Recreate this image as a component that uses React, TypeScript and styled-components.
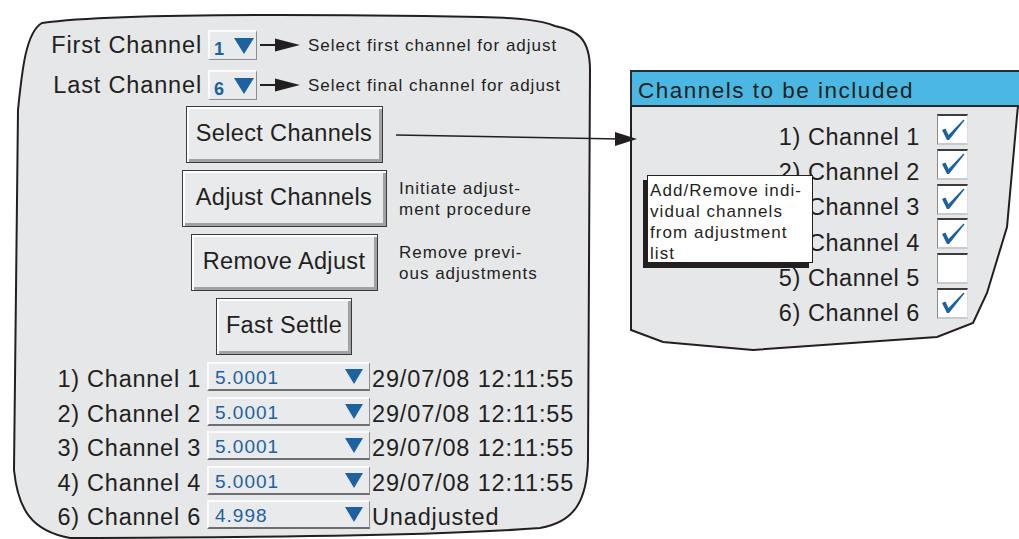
import React, { FC } from 'react';
import styled, { createGlobalStyle } from 'styled-components';

const GlobalStyle = createGlobalStyle`
	html, body {
		margin: 0;
		padding: 0;
		background: #ffffff;
		overflow: hidden;
	}
	body {
		font-family: 'Liberation Sans', Arial, sans-serif;
		color: #231f20;
	}
`;

const INK = '#231f20';
const BLUE = '#1d62a0';
const PANEL = '#e6e7e9';

const Page = styled.div`
	position: relative;
	width: 1019px;
	height: 539px;
	display: flex;
	align-items: flex-start;
	overflow: hidden;
`;

const LeftPanel = styled.div`
	position: relative;
	width: 600px;
	height: 539px;
	flex-shrink: 0;
	display: flex;
	flex-direction: column;
	padding-top: 30px;
	box-sizing: border-box;
`;

const Outline = styled.svg`
	position: absolute;
	left: 0;
	top: 0;
	z-index: 0;
`;

const Layer = styled.div`
	position: relative;
	z-index: 1;
	display: flex;
	flex-direction: column;
`;

const SelectorRow = styled.div`
	display: flex;
	align-items: center;
	height: 30px;
	& + & {
		margin-top: 10px;
	}
`;

const RowLabel = styled.span<{ $width: number; $spacing: number }>`
	width: ${(p) => p.$width}px;
	flex-shrink: 0;
	text-align: right;
	font-size: 23.5px;
	line-height: 22px;
	letter-spacing: ${(p) => p.$spacing}px;
	margin-bottom: 1px;
	white-space: nowrap;
`;

const MiniSelect = styled.div`
	margin-left: 6px;
	width: 49px;
	height: 30px;
	box-sizing: border-box;
	display: flex;
	align-items: center;
	justify-content: space-between;
	padding: 0 2px 0 4px;
	background: #e9eaec;
	border-top: 2px solid #fbfbfb;
	border-left: 2px solid #fbfbfb;
	border-right: 1px solid #8d8e90;
	border-bottom: 1px solid #8d8e90;
`;

const MiniValue = styled.span`
	color: ${BLUE};
	font-weight: bold;
	font-size: 18px;
	padding-top: 8px;
`;

const Note = styled.span`
	font-size: 17px;
	line-height: 21px;
	letter-spacing: 1px;
	white-space: nowrap;
`;

const PointerNote = styled(Note)`
	margin-left: 6px;
`;

const ButtonGrid = styled.div`
	margin-top: 6px;
	display: grid;
	grid-template-columns: 169px 230px auto;
	row-gap: 7px;
	align-items: center;
`;

const BevelButton = styled.button<{ $width: number }>`
	grid-column: 2;
	justify-self: center;
	width: ${(p) => p.$width}px;
	height: 57px;
	box-sizing: border-box;
	border: 1px solid #3a3a3a;
	background: #e9eaec;
	box-shadow: inset 2px 2px 0 #ffffff, inset -3px -3px 0 #a1a2a4;
	font-family: 'Liberation Sans', Arial, sans-serif;
	font-size: 23.5px;
	letter-spacing: 0.35px;
	color: ${INK};
	padding: 0 0 2px 0;
	white-space: nowrap;
`;

const ButtonNote = styled(Note)`
	grid-column: 3;
	white-space: pre;
`;

const ChannelList = styled.div`
	margin-top: 7px;
	display: flex;
	flex-direction: column;
	gap: 5.5px;
`;

const ChannelRow = styled.div`
	display: flex;
	align-items: flex-end;
	height: 29px;
`;

const ValueSelect = styled.div`
	margin-left: 6px;
	width: 163px;
	height: 29px;
	flex-shrink: 0;
	box-sizing: border-box;
	display: flex;
	align-items: center;
	justify-content: space-between;
	padding: 0 6px 0 6px;
	background: #e9eaec;
	border-top: 2px solid #fbfbfb;
	border-left: 2px solid #fbfbfb;
	border-right: 1px solid #8d8e90;
	border-bottom: 2px solid #6d6e70;
`;

const ValueText = styled.span`
	color: ${BLUE};
	font-size: 19px;
	letter-spacing: 1px;
	padding-top: 3px;
`;

const Stamp = styled.span`
	margin-left: 2px;
	margin-bottom: 1px;
	font-size: 23.5px;
	line-height: 22px;
	letter-spacing: 0.85px;
	white-space: nowrap;
`;

const RightPanel = styled.div`
	margin-top: 70px;
	margin-left: 30px;
	width: 389px;
	flex-shrink: 0;
	display: flex;
	flex-direction: column;
`;

const PanelHeader = styled.div`
	height: 36px;
	box-sizing: border-box;
	background: #4ab8e3;
	border-top: 2px solid #2b2b2b;
	border-left: 2px solid #2b2b2b;
	border-bottom: 1px solid #2b2b2b;
	padding: 6px 0 0 6px;
	font-size: 22.5px;
	line-height: 26px;
	letter-spacing: 1.5px;
	white-space: nowrap;
`;

const PanelBody = styled.div`
	position: relative;
	height: 246px;
`;

const IncludeList = styled.div`
	position: relative;
	z-index: 1;
	padding-top: 8px;
	display: flex;
	flex-direction: column;
	gap: 3.8px;
`;

const IncludeRow = styled.div`
	display: flex;
	justify-content: flex-end;
	align-items: flex-end;
	height: 31px;
	padding-right: 51px;
`;

const IncludeLabel = styled.span<{ $drop: number }>`
	margin-right: 17px;
	margin-bottom: ${(p) => -p.$drop}px;
	font-size: 23.5px;
	line-height: 22px;
	letter-spacing: 0.55px;
	white-space: nowrap;
`;

const CheckBox = styled.div`
	width: 31px;
	height: 31px;
	box-sizing: border-box;
	background: #ffffff;
	border-top: 2px solid #3d3d3d;
	border-left: 1px solid #8a8a8a;
	border-bottom: 2px solid #c9cacc;
	border-right: 1px solid #dcdddf;
	display: flex;
	align-items: center;
	justify-content: center;
`;

const Callout = styled.div`
	position: absolute;
	left: 647px;
	top: 175px;
	width: 166px;
	height: 88px;
	box-sizing: border-box;
	background: #ffffff;
	border: 1px solid ${INK};
	box-shadow: -4px 5px 0 ${INK};
	padding: 4px 0 0 2px;
	font-size: 17px;
	line-height: 21px;
	letter-spacing: 1.05px;
	white-space: pre;
	z-index: 3;
`;

const Connector = styled.svg`
	position: absolute;
	left: 0;
	top: 0;
	z-index: 2;
	pointer-events: none;
`;

const Triangle: FC<{ w: number; h: number }> = ({ w, h }) => (
	<svg width={w} height={h} viewBox={`0 0 ${w} ${h}`}>
		<polygon points={`0,0 ${w},0 ${w / 2},${h}`} fill={BLUE} />
	</svg>
);

const Pointer: FC = () => (
	<svg width="42" height="14" viewBox="0 0 42 14" style={{ marginLeft: 3 }}>
		<line x1="0" y1="7" x2="18" y2="7" stroke={INK} strokeWidth="2" />
		<polygon points="15,0.5 40,7 15,13.5" fill={INK} />
	</svg>
);

const Tick: FC = () => (
	<svg width="26" height="24" viewBox="0 0 26 24">
		<path d="M2 12 L5.5 10.5 L8.5 17 L23.5 1.5 L24.5 2.5 L9 22 L7 22 Z" fill={BLUE} />
	</svg>
);

const selectors = [
	{ label: 'First Channel', value: '1', note: 'Select first channel for adjust' },
	{ label: 'Last Channel', value: '6', note: 'Select final channel for adjust' },
];

const buttons = [
	{ text: 'Select Channels', width: 197, note: '' },
	{ text: 'Adjust Channels', width: 205, note: 'Initiate adjust-\nment procedure' },
	{ text: 'Remove Adjust', width: 187, note: 'Remove previ-\nous adjustments' },
	{ text: 'Fast Settle', width: 136, note: '' },
];

const channels = [
	{ label: '1) Channel 1', value: '5.0001', stamp: '29/07/08 12:11:55' },
	{ label: '2) Channel 2', value: '5.0001', stamp: '29/07/08 12:11:55' },
	{ label: '3) Channel 3', value: '5.0001', stamp: '29/07/08 12:11:55' },
	{ label: '4) Channel 4', value: '5.0001', stamp: '29/07/08 12:11:55' },
	{ label: '6) Channel 6', value: '4.998', stamp: 'Unadjusted' },
];

const included = [
	{ label: '1) Channel 1', on: true },
	{ label: '2) Channel 2', on: true },
	{ label: '3) Channel 3', on: true },
	{ label: '4) Channel 4', on: true },
	{ label: '5) Channel 5', on: false },
	{ label: '6) Channel 6', on: true },
];

const App: FC = () => (
	<>
		<GlobalStyle />
		<Page>
			<LeftPanel>
				<Outline width="600" height="539" viewBox="0 0 600 539">
					<path
						d="M42 23 C110 14, 300 14, 480 17 C520 18, 540 20, 555 26 C575 30, 590 36, 590 70 L588 460 C587 500, 575 522, 540 528 C450 535, 300 537, 70 538 C32 531, 18 510, 14 470 L18 110 C22 70, 26 32, 42 23 Z"
						fill={PANEL}
						stroke={INK}
						strokeWidth="2"
					/>
				</Outline>
				<Layer>
					{selectors.map((s) => (
						<SelectorRow key={s.label}>
							<RowLabel $width={202} $spacing={0.85}>
								{s.label}
							</RowLabel>
							<MiniSelect>
								<MiniValue>{s.value}</MiniValue>
								<Triangle w={20} h={16} />
							</MiniSelect>
							<Pointer />
							<PointerNote>{s.note}</PointerNote>
						</SelectorRow>
					))}
					<ButtonGrid>
						{buttons.map((b) => (
							<React.Fragment key={b.text}>
								<BevelButton $width={b.width}>{b.text}</BevelButton>
								{b.note ? <ButtonNote>{b.note}</ButtonNote> : <span />}
							</React.Fragment>
						))}
					</ButtonGrid>
					<ChannelList>
						{channels.map((c) => (
							<ChannelRow key={c.label}>
								<RowLabel $width={201} $spacing={0.75}>
									{c.label}
								</RowLabel>
								<ValueSelect>
									<ValueText>{c.value}</ValueText>
									<Triangle w={18} h={15} />
								</ValueSelect>
								<Stamp>{c.stamp}</Stamp>
							</ChannelRow>
						))}
					</ChannelList>
				</Layer>
			</LeftPanel>
			<RightPanel>
				<PanelHeader>Channels to be included</PanelHeader>
				<PanelBody>
					<Outline width="389" height="246" viewBox="0 0 389 246">
						<path
							d="M1 0 L388 0 L387 10 L377 121 L357 187 L343 217 L307 231 L123 244 L33 236 L1 224 Z"
							fill={PANEL}
							stroke={INK}
							strokeWidth="2"
						/>
					</Outline>
					<IncludeList>
						{included.map((c, i) => (
							<IncludeRow key={c.label}>
								<IncludeLabel $drop={3 + i * 0.4}>{c.label}</IncludeLabel>
								<CheckBox>{c.on && <Tick />}</CheckBox>
							</IncludeRow>
						))}
					</IncludeList>
				</PanelBody>
			</RightPanel>
			<Callout>{'Add/Remove indi-\nvidual channels\nfrom adjustment\nlist'}</Callout>
			<Connector width="1019" height="539" viewBox="0 0 1019 539">
				<line x1="396" y1="135" x2="620" y2="139" stroke={INK} strokeWidth="1.6" />
				<polygon points="615,132 637,139 615,146" fill={INK} />
			</Connector>
		</Page>
	</>
);

export default App;
